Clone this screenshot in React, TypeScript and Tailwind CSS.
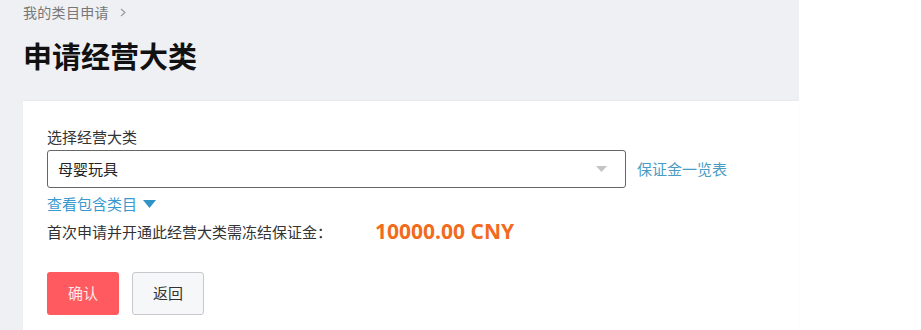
import { useState } from "react";

const cjk = '"Noto Sans CJK SC", "Open Sans", sans-serif';

export default function App() {
  const [category] = useState("母婴玩具");

  return (
    <div className="min-h-[330px] w-full bg-white" style={{ fontFamily: cjk }}>
      <div className="flex min-h-[330px] w-[799px] flex-col bg-[#eff0f4] pl-[23px]">
        {/* Breadcrumb */}
        <div className="flex items-center gap-[11px] pt-[2px] text-[14px] leading-5 text-[#777]">
          <span className="tracking-[0.3px]">我的类目申请</span>
          <svg width="6" height="9" viewBox="0 0 6 9">
            <path d="M1 1 L5 4.5 L1 8" fill="none" stroke="#999" strokeWidth="1.2" />
          </svg>
        </div>

        <h1 className="mt-[15px] text-[29px] font-bold leading-9 text-[#111]">申请经营大类</h1>

        {/* Form card */}
        <div className="mt-[28px] flex-1 bg-white pl-6 pt-[26px] shadow-[0_-1px_2px_rgba(0,0,0,0.03)]">
          <div className="text-[15px] leading-5 text-[#333]">选择经营大类</div>

          <div className="mt-[3px] flex items-center">
            <div className="flex h-[38px] w-[579px] items-center justify-between rounded-[3px] border border-[#666] pl-[10px] pr-[18px]">
              <span className="text-[15px] text-[#222]">{category}</span>
              <svg width="11" height="6" viewBox="0 0 11 6">
                <path d="M0 0 L11 0 L5.5 6 Z" fill="#c4c4c4" />
              </svg>
            </div>
            <a className="ml-[11px] cursor-pointer text-[15px] text-[#4a9cc4]">保证金一览表</a>
          </div>

          <div className="mt-[6px] flex items-center gap-[6px] text-[15px] leading-5 text-[#3a9ad0]">
            <span>查看包含类目</span>
            <svg width="13" height="8" viewBox="0 0 13 8">
              <path d="M0 0 L13 0 L6.5 8 Z" fill="#2f93c8" />
            </svg>
          </div>

          <div className="mt-[8px] flex h-5 items-center">
            <span className="w-[328px] text-[15px] leading-5 text-[#333]">首次申请并开通此经营大类需冻结保证金：</span>
            <span className="text-[21px] font-bold text-[#f26b1d]" style={{ fontFamily: '"Open Sans", sans-serif' }}>
              10000.00 CNY
            </span>
          </div>

          <div className="mt-[30px] flex gap-[13px]">
            <button className="h-[43px] w-[72px] rounded-[3px] bg-[#ff5a5f] text-[15px] text-[#fde8ea]">确认</button>
            <button className="h-[43px] w-[72px] rounded-[3px] border border-[#c8c8cc] bg-[#f6f7f9] text-[15px] text-[#333]">
              返回
            </button>
          </div>
        </div>
      </div>
    </div>
  );
}
